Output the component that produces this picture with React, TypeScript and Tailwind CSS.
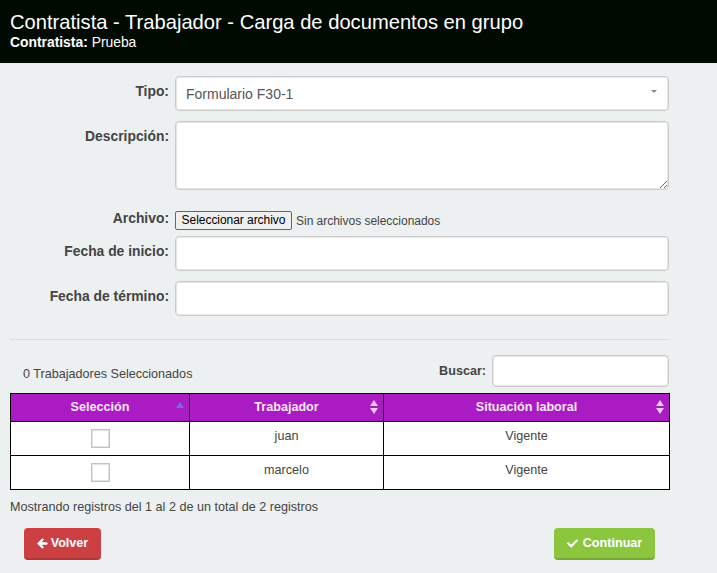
import React from 'react';
import { FaArrowLeft, FaCheck } from 'react-icons/fa';

const inputCls =
  'block w-[494px] rounded border border-[#cccccc] bg-white shadow-[inset_0_0_0_1px_#e6e6e6]';

function Label({ children }: { children: React.ReactNode }) {
  return (
    <label className="w-[159px] shrink-0 text-right text-[13.86px] font-bold leading-[20px] text-[#444444]">
      {children}
    </label>
  );
}

function SortIcon({ active }: { active?: boolean }) {
  if (active) {
    return (
      <svg width="10" height="8" viewBox="0 0 10 8" className="absolute right-[4px] top-[7px]">
        <path d="M5 1 L9 7 L1 7 Z" fill="#6f70d8" />
      </svg>
    );
  }
  return (
    <svg width="10" height="16" viewBox="0 0 10 16" className="absolute right-[4px] top-[5px]">
      <path d="M5 1 L9 7 L1 7 Z" fill="#e6cdec" />
      <path d="M5 15 L9 9 L1 9 Z" fill="#e6cdec" />
    </svg>
  );
}

const rows = [
  { name: 'juan', estado: 'Vigente' },
  { name: 'marcelo', estado: 'Vigente' },
];

export default function App() {
  return (
    <div className="h-[573px] w-[717px] overflow-hidden bg-[#ecf0f1] font-['Liberation_Sans',Arial,sans-serif] text-[#444444]">
      {/* Header */}
      <div className="h-[63px] bg-[#000a00] px-[10px] pt-[10px] text-white">
        <h1 className="text-[20.16px] font-normal leading-[24px]">
          Contratista - Trabajador - Carga de documentos en grupo
        </h1>
        <p className="text-[13.86px] leading-[16px]">
          <b>Contratista:</b> Prueba
        </p>
      </div>

      {/* Form */}
      <div className="pl-[10px] pt-[13px]">
        <div className="flex gap-[6px]">
          <Label>
            <span className="block pt-[5px]">Tipo:</span>
          </Label>
          <div className={`${inputCls} relative flex h-[35px] items-center pl-[10px] pt-[2px] text-[14px] text-[#555555]`}>
            Formulario F30-1
            <span className="absolute right-[11px] top-[13px] h-0 w-0 border-x-[3px] border-t-[3px] border-x-transparent border-t-[#888888]" />
          </div>
        </div>

        <div className="mt-[10px] flex gap-[6px]">
          <Label>
            <span className="block pt-[5px]">Descripción:</span>
          </Label>
          <textarea className={`${inputCls} h-[69px] resize-y outline-none`} />
        </div>

        <div className="mt-[21px] flex h-[25px] gap-[6px]">
          <Label>
            <span className="-mt-[3px] block">Archivo:</span>
          </Label>
          <div className="flex h-[19px] items-center text-[12px]">
            <button className="h-[19px] w-[117px] rounded-[2px] border border-[#666666] bg-[#efefef] text-center leading-[15px] tracking-[-0.05px] text-black">
              Seleccionar archivo
            </button>
            <span className="ml-[4px] tracking-[-0.02px]">Sin archivos seleccionados</span>
          </div>
        </div>

        <div className="flex gap-[6px]">
          <Label>
            <span className="block pt-[5px]">Fecha de inicio:</span>
          </Label>
          <input className={`${inputCls} h-[35px] outline-none`} />
        </div>

        <div className="mt-[10px] flex gap-[6px]">
          <Label>
            <span className="block pt-[5px]">Fecha de término:</span>
          </Label>
          <input className={`${inputCls} h-[35px] outline-none`} />
        </div>

        <hr className="mt-[23px] w-[659px] border-t border-[#d9dcdd]" />

        {/* Table toolbar */}
        <div className="mt-[15px] flex h-[32px] w-[659px] items-center justify-between">
          <span className="pl-[13px] pt-[5px] text-[12.6px] leading-[20px]">0 Trabajadores Seleccionados</span>
          <div className="flex items-center gap-[6px]">
            <span className="text-[12.6px] font-bold">Buscar:</span>
            <input className="h-[32px] w-[177px] rounded border border-[#cccccc] bg-white shadow-[inset_0_0_0_1px_#e6e6e6] outline-none" />
          </div>
        </div>

        {/* Table */}
        <table className="mt-[6px] w-[659px] table-fixed border-collapse border border-black text-center text-[12.6px]">
          <colgroup>
            <col className="w-[179px]" />
            <col className="w-[194px]" />
            <col className="w-[286px]" />
          </colgroup>
          <thead>
            <tr className="h-[28px] bg-[#ab1bc4] font-bold text-[#f6e6f9]">
              <th className="relative border border-black">
                Selección
                <SortIcon active />
              </th>
              <th className="relative border border-black">
                Trabajador
                <SortIcon />
              </th>
              <th className="relative border border-black">
                Situación laboral
                <SortIcon />
              </th>
            </tr>
          </thead>
          <tbody className="bg-white">
            {rows.map((r) => (
              <tr key={r.name} className="h-[34px]">
                <td className="border border-black align-top">
                  <span className="mx-auto mt-[7px] block h-[19px] w-[19px] border border-[#bfc3c5] bg-white shadow-[inset_0_0_0_1px_#e2e4e5]" />
                </td>
                <td className="border border-black pt-[7px] align-top leading-[14px]">{r.name}</td>
                <td className="border border-black pt-[7px] align-top leading-[14px]">{r.estado}</td>
              </tr>
            ))}
          </tbody>
        </table>

        <p className="mt-[10px] text-[12.6px] leading-[14px]">
          Mostrando registros del 1 al 2 de un total de 2 registros
        </p>

        {/* Buttons */}
        <div className="mt-[14px] flex w-[645px] justify-between pl-[14px]">
          <button className="flex h-[32px] w-[77px] items-center justify-center gap-[3px] rounded border-b-[2px] border-[#b03535] bg-[#cc4044] text-[12.6px] font-bold text-white">
            <FaArrowLeft className="h-[11px] w-[11px]" stroke="currentColor" strokeWidth={40} />
            Volver
          </button>
          <button className="flex h-[32px] w-[101px] items-center justify-center gap-[5px] rounded border-b-[2px] border-[#75a832] bg-[#8cc63f] pt-[1px] text-[12.6px] font-bold text-white">
            <FaCheck className="h-[11px] w-[11px]" />
            Continuar
          </button>
        </div>
      </div>
    </div>
  );
}
